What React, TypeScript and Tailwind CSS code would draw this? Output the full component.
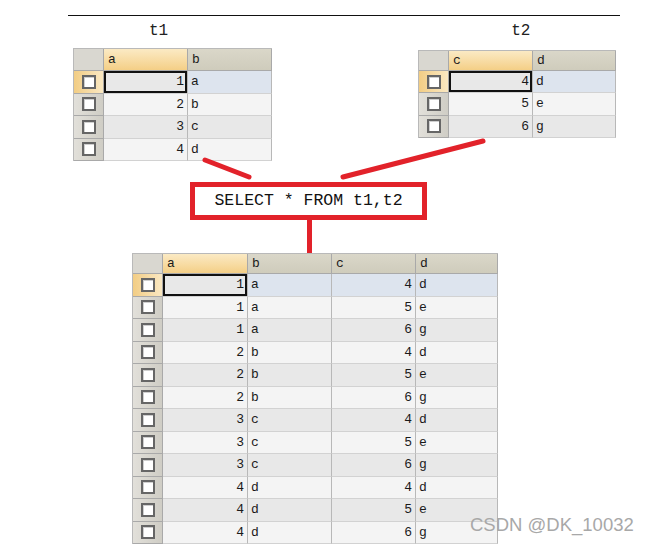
import React from "react";

type Col = { w: number; label: string; num?: boolean };

type GridProps = {
  cols: Col[];
  rows: string[][];
  headH: number;
  rowH: number;
  className?: string;
};

const mono = { fontFamily: '"Liberation Mono", "DejaVu Sans Mono", monospace' };

const Checkbox = () => (
  <span className="block w-[14px] h-[14px] border-[2.5px] border-[#666] bg-white shadow-[inset_1px_1px_0_#cfcfcf]" />
);

const Grid: React.FC<GridProps> = ({ cols, rows, headH, rowH, className }) => {
  return (
    <div
      className={`w-fit border-l border-t border-[#b9b9b9] text-[13px] text-[#1a1a1a] leading-none ${className ?? ""}`}
      style={mono}
    >
      {/* header */}
      <div className="flex" style={{ height: headH }}>
        <div className="w-[30px] shrink-0 bg-[#d9d7d0] border-r border-b border-[#a9a9a9]" />
        {cols.map((c, i) => (
          <div
            key={c.label}
            className={`shrink-0 flex items-center pl-[4px] border-r border-b border-[#a9a9a9] ${
              i === 0
                ? "bg-linear-to-b from-[#fbeac4] to-[#f4cf86]"
                : "bg-linear-to-b from-[#dad7c9] to-[#cfccbc]"
            }`}
            style={{ width: c.w }}
          >
            {c.label}
          </div>
        ))}
      </div>
      {/* rows */}
      {rows.map((r, ri) => (
        <div key={ri} className="flex" style={{ height: rowH }}>
          <div
            className={`w-[30px] shrink-0 flex items-center justify-center border-r border-b border-[#a9a9a9] ${
              ri === 0
                ? "bg-linear-to-r from-[#f2cd84] to-[#fae8c2]"
                : "bg-linear-to-r from-[#e2e0da] to-[#cfcdc5]"
            }`}
          >
            <Checkbox />
          </div>
          {r.map((v, ci) => {
            const col = cols[ci];
            let bg = ri % 2 === 0 ? "bg-[#e8e8e8]" : "bg-[#f4f4f4]";
            if (ri === 0 && ci > 0) bg = "bg-[#dde4ee]";
            const sel = ri === 0 && ci === 0 ? "shadow-[inset_0_0_0_2px_#111]" : "";
            return (
              <div
                key={ci}
                className={`shrink-0 flex items-center border-r border-b border-r-[#b8b8b8] border-b-[#d2d2d2] ${bg} ${sel} ${
                  col.num ? "justify-end pr-[3px]" : "pl-[3px]"
                }`}
                style={{ width: col.w }}
              >
                {v}
              </div>
            );
          })}
        </div>
      ))}
    </div>
  );
};

const t1Rows = [
  ["1", "a"],
  ["2", "b"],
  ["3", "c"],
  ["4", "d"],
];

const t2Rows = [
  ["4", "d"],
  ["5", "e"],
  ["6", "g"],
];

const joinRows: string[][] = [];
t1Rows.forEach((a) => t2Rows.forEach((b) => joinRows.push([...a, ...b])));

export default function App() {
  return (
    <div className="relative w-[651px] h-[549px] bg-white overflow-hidden">
      <div className="pt-[15px]">
        <div className="ml-[68px] w-[552px] h-px bg-[#111]" />
      </div>

      {/* titles */}
      <div className="flex h-[32px] text-[16px] text-[#222] pt-[3px]" style={mono}>
        <span className="ml-[149px]">t1</span>
        <span className="ml-[343px]">t2</span>
      </div>

      {/* source tables */}
      <div className="flex items-start">
        <Grid
          className="ml-[73px]"
          cols={[
            { w: 84, label: "a", num: true },
            { w: 84, label: "b" },
          ]}
          rows={t1Rows}
          headH={22}
          rowH={22.5}
        />
        <Grid
          className="ml-[146px] mt-[2px]"
          cols={[
            { w: 84, label: "c", num: true },
            { w: 83, label: "d" },
          ]}
          rows={t2Rows}
          headH={20}
          rowH={22.3}
        />
      </div>

      {/* query box */}
      <div className="mt-[21px] ml-[190px] w-[237px] h-[38px] border-[5px] border-[#e2222a] flex items-center justify-center">
        <span className="text-[16.5px] text-[#111]" style={mono}>
          SELECT * FROM t1,t2
        </span>
      </div>
      <div className="ml-[307px] w-[5px] h-[33px] bg-[#e2222a]" />

      {/* result */}
      <Grid
        className="ml-[132px]"
        cols={[
          { w: 85, label: "a", num: true },
          { w: 84, label: "b" },
          { w: 84, label: "c", num: true },
          { w: 82, label: "d" },
        ]}
        rows={joinRows}
        headH={20}
        rowH={22.5}
      />

      {/* connectors */}
      <svg className="absolute inset-0 pointer-events-none" width="651" height="549">
        <line x1="205" y1="160" x2="249" y2="177" stroke="#e2222a" strokeWidth="5" strokeLinecap="round" />
        <line x1="483" y1="141" x2="343" y2="177" stroke="#e2222a" strokeWidth="5" strokeLinecap="round" />
      </svg>

      <span
        className="absolute left-[470px] top-[516px] text-[18.5px] text-[#a8a8a8] leading-none"
        style={{ fontFamily: '"Liberation Sans", Arial, sans-serif' }}
      >
        CSDN @DK_10032
      </span>
    </div>
  );
}
